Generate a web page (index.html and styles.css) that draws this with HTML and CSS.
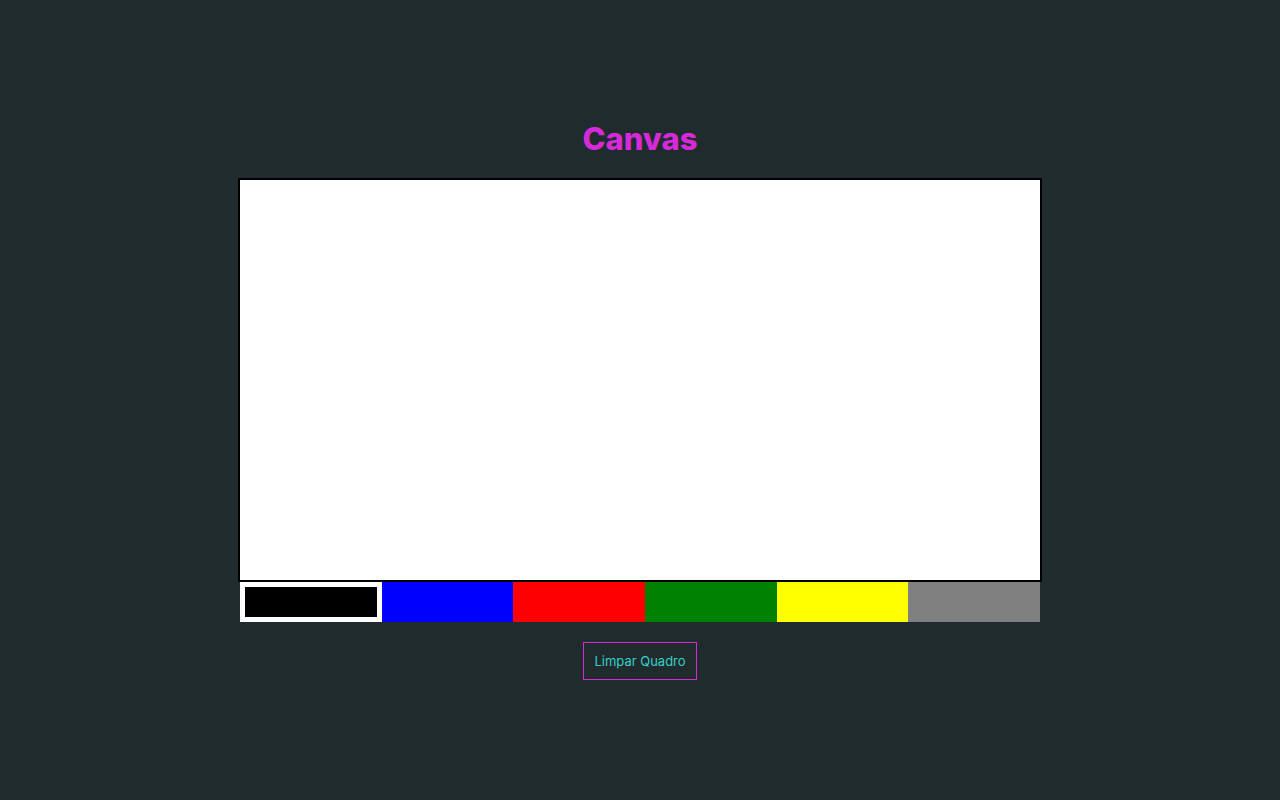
FILE: index.html
```html
<!DOCTYPE html>
<html lang="pt">
<head>
<meta charset="utf-8">
<title>Canvas</title>
<link rel="stylesheet" href="styles.css">
</head>
<body>
<main class="app">
  <h1 class="title">Canvas</h1>
  <div class="board">
    <canvas class="canvas" width="800" height="400"></canvas>
    <div class="palette">
      <div class="swatch selected" style="background:#000000"></div>
      <div class="swatch" style="background:#0000ff"></div>
      <div class="swatch" style="background:#ff0000"></div>
      <div class="swatch" style="background:#008000"></div>
      <div class="swatch" style="background:#ffff00"></div>
      <div class="swatch" style="background:#808080"></div>
    </div>
  </div>
  <button class="clear">Limpar Quadro</button>
</main>
</body>
</html>
```

FILE: styles.css
```css
html, body {
  margin: 0;
  padding: 0;
  background: #1f2b2c;
  height: 100%;
}
body {
  font-family: Inter, "Noto Sans", sans-serif;
}
.app {
  display: flex;
  flex-direction: column;
  align-items: center;
  padding-top: 119px;
}
.title {
  margin: 0 0 20px;
  font-size: 31px;
  line-height: 39px;
  font-weight: 800;
  color: #d62ad8;
}
.board {
  display: flex;
  flex-direction: column;
  width: 804px;
}
.canvas {
  display: block;
  width: 800px;
  height: 400px;
  background: #ffffff;
  border: 2px solid #000000;
}
.palette {
  display: flex;
  margin: 0 2px;
  height: 40px;
}
.swatch {
  flex: 1;
}
.swatch.selected {
  border: 5px solid #ffffff;
}
.clear {
  margin-top: 20px;
  padding: 0 10px;
  height: 38px;
  background: transparent;
  border: 1px solid #d62ad8;
  color: #36cfc9;
  font-family: Inter, "Noto Sans", sans-serif;
  font-size: 13px;
}
```
